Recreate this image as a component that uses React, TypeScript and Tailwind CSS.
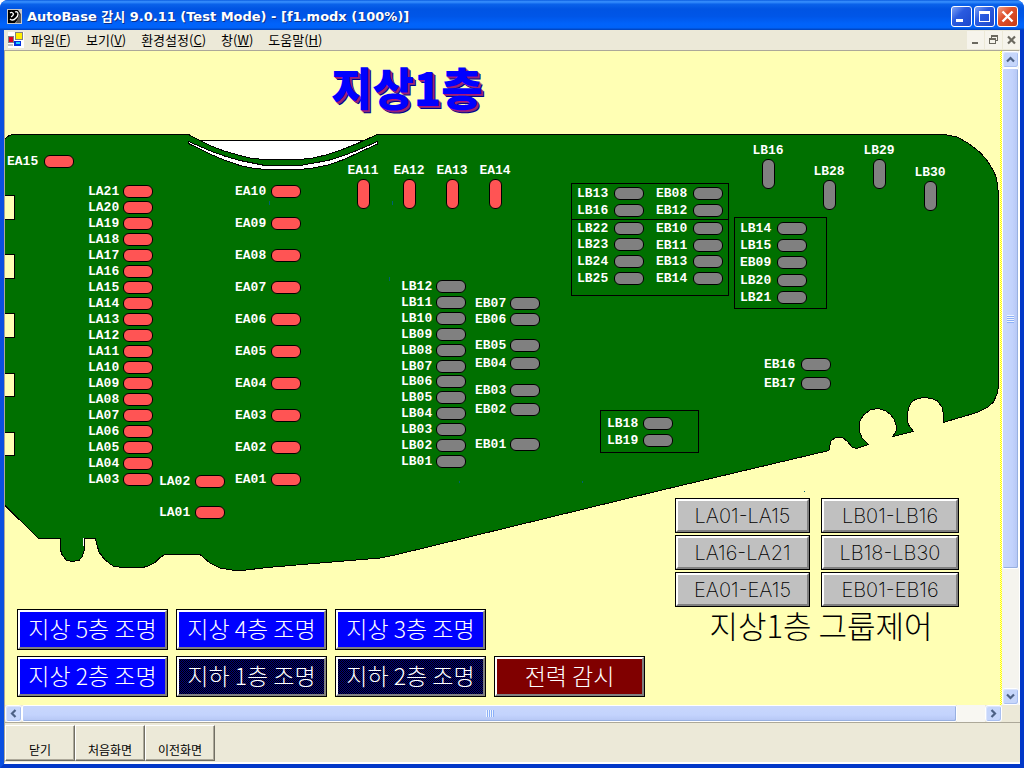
import React from "react";

type Column = { x: number; width: number; on?: boolean; items: [string, number][] };

/* Horizontal fixtures: label on the left, lamp on the right edge of the column. */
const columns: Column[] = [
  { x: 2, width: 67, on: true, items: [["EA15", 104]] },
  {
    x: 83, width: 65, on: true,
    items: [
      ["LA21", 134], ["LA20", 150], ["LA19", 166], ["LA18", 182], ["LA17", 198], ["LA16", 214], ["LA15", 230],
      ["LA14", 246], ["LA13", 262], ["LA12", 278], ["LA11", 294], ["LA10", 310], ["LA09", 326], ["LA08", 342],
      ["LA07", 358], ["LA06", 374], ["LA05", 390], ["LA04", 406], ["LA03", 422],
    ],
  },
  { x: 154, width: 66, on: true, items: [["LA02", 424], ["LA01", 455]] },
  {
    x: 230, width: 66, on: true,
    items: [
      ["EA10", 134], ["EA09", 166], ["EA08", 198], ["EA07", 230], ["EA06", 262],
      ["EA05", 294], ["EA04", 326], ["EA03", 358], ["EA02", 390], ["EA01", 422],
    ],
  },
  {
    x: 396, width: 65,
    items: [
      ["LB12", 229], ["LB11", 245], ["LB10", 261], ["LB09", 277], ["LB08", 293], ["LB07", 309],
      ["LB06", 324], ["LB05", 340], ["LB04", 356], ["LB03", 372], ["LB02", 388], ["LB01", 404],
    ],
  },
  {
    x: 470, width: 65,
    items: [["EB07", 246], ["EB06", 262], ["EB05", 288], ["EB04", 306], ["EB03", 333], ["EB02", 352], ["EB01", 387]],
  },
  {
    x: 572, width: 67,
    items: [["LB13", 136], ["LB16", 153], ["LB22", 171], ["LB23", 187], ["LB24", 204], ["LB25", 221]],
  },
  {
    x: 651, width: 67,
    items: [["EB08", 136], ["EB12", 153], ["EB10", 171], ["EB11", 188], ["EB13", 204], ["EB14", 221]],
  },
  { x: 735, width: 67, items: [["LB14", 171], ["LB15", 188], ["EB09", 205], ["LB20", 223], ["LB21", 240]] },
  { x: 602, width: 66, items: [["LB18", 366], ["LB19", 383]] },
  { x: 759, width: 67, items: [["EB16", 307], ["EB17", 326]] },
];

/* Upright fixtures: label centred above the lamp. */
const uprights: { code: string; x: number; y: number; on?: boolean }[] = [
  { code: "EA11", x: 342, y: 113, on: true },
  { code: "EA12", x: 388, y: 113, on: true },
  { code: "EA13", x: 431, y: 113, on: true },
  { code: "EA14", x: 474, y: 113, on: true },
  { code: "LB16", x: 747, y: 93 },
  { code: "LB28", x: 808, y: 114 },
  { code: "LB29", x: 858, y: 93 },
  { code: "LB30", x: 909, y: 115 },
];

const groups = ["LA01-LA15", "LB01-LB16", "LA16-LA21", "LB18-LB30", "EA01-EA15", "EB01-EB16"];

const menus: [string, string][] = [["파일", "F"], ["보기", "V"], ["환경설정", "C"], ["창", "W"], ["도움말", "H"]];

const labelFont = "font-['Liberation_Mono',monospace] text-[13px] leading-[13px] font-bold text-white";

function Lamp({ on, upright }: { on?: boolean; upright?: boolean }) {
  return (
    <span
      className={`block shrink-0 rounded-md border border-black ${upright ? "h-[30px] w-[13px]" : "h-[13px] w-[30px]"} ${on ? "bg-[#ff5454]" : "bg-[#808080]"}`}
    />
  );
}

function FloorPlan() {
  return (
    <svg className="absolute top-0 left-0" width="996" height="654" viewBox="5 51 996 654" shapeRendering="crispEdges" aria-hidden="true">
      <path
        fill="#007000"
        stroke="#000"
        d="M4.5 140 Q8 134.5 14 134.5 H188.5 L199 140 L210 145.500 L224 151 L240 155.500 L252 158.500 L265 159.500 H300 L313 158 L328 154.500 L345 148.500 L360 142.500 L377 134.500 H944 L950 135.500 L957 137 L968 143 L974 147.500 L980 152.500 L986 159 L990 165 L994 172 L996.500 178 L998 190 L998.500 200 V387 L997 394 L993.500 402 L988 407 L977 412.500 L943 422.500 V412 L942 407 L937.500 401 L932 398.500 L923 397.500 L915 399.500 L911 403 L908.500 408 L907 418 L908.500 425 L913.500 431.500 L893 436.500 L896.500 430 L896 425 L894 419 L890 414 L885 410.500 L878 408.500 L870 410 L863.500 415 L860 421 L859 430 L862 438 L868.500 444.500 L857 448.500 L852 447 L847 441 L843 438 L839 437.500 L835 438 L831 441 L829.500 447 L829 450.500 L660 490.500 L395 555 L380 558 L350 560.500 L267 567.500 L238 571 L220 568 L210 563 L200 554.500 H165 L160 557.500 L155 562.500 L147 566.500 L142 567.500 H122 L113 566 L105 560 L99 552 L96.500 543 L95.500 538.500 H84.500 V550 L82 557 L79 560.500 L72 561.500 L66 560 L62 554.500 L60.500 550 V538.500 H38.500 L4.500 505 Z"
      />
      <path fill="#fff" stroke="#000" d="M200 140.500 H364 L345 148.500 L328 154.500 L313 158 L300 159.500 H265 L252 158.500 L240 155.500 L224 151 L210 145.500 Z" />
      <path
        fill="#fff"
        stroke="#000"
        d="M188.500 141.500 L213 152 L226 156.500 L240 160.500 L265 165.500 H300 L328 160.500 L344 155.500 L358 150 L377.500 141.500 V144 L360 152 L344 159.500 L328 165 L313 168 L300 169.500 H265 L252 168 L240 165.500 L224 160 L210 154 L188.500 143.500 Z"
      />
      <g fill="#ffffb4" stroke="#000">
        <path d="M4.500 195.500 H14.500 V219.500 H4.500 Z M4.500 254.500 H14.500 V278.500 H4.500 Z M4.500 313.500 H14.500 V337.500 H4.500 Z M4.500 373.500 H14.500 V396.500 H4.500 Z M4.500 432.500 H14.500 V455.500 H4.500 Z" />
      </g>
      <path fill="none" stroke="#000" d="M571.500 183.500 H728.500 V295.500 H571.500 Z M571.500 219.500 H728.500 M734.500 217.500 H826.500 V308.500 H734.500 Z M600.500 410.500 H698.500 V452.500 H600.500 Z" />
      <path stroke="#006070" d="M269.500 201 V205 M392.500 201 V205 M389.500 277 V281 M459.500 481 V483 M582.500 481 V483 M804.500 491 V492" />
      <path stroke="#fff" d="M83.500 538 V546" />
    </svg>
  );
}

function PanelButton({ tone, children }: { tone: "blue" | "dark" | "red"; children: React.ReactNode }) {
  const fill = {
    blue: "bg-[#0000ff]",
    dark: "bg-[repeating-conic-gradient(#000080_0_25%,#000000_0_50%)] bg-[length:2px_2px] bg-fixed",
    red: "bg-[#800000]",
  }[tone];
  return (
    <button type="button" className="h-[41px] w-[151px] border border-black">
      <span
        className={`flex h-full items-center justify-center border-2 border-t-white border-r-[#808080] border-b-[#808080] border-l-white pb-1 font-['Noto_Sans_CJK_KR',sans-serif] text-[23px] leading-6 font-light whitespace-pre text-white ${fill}`}
      >
        {children}
      </span>
    </button>
  );
}

function Arrow({ d }: { d: string }) {
  return (
    <svg width="9" height="9" viewBox="0 0 9 9" aria-hidden="true">
      <path d={d} fill="none" stroke="#4d6185" strokeWidth="2.200" />
    </svg>
  );
}

const scrollBtn =
  "flex size-[17px] shrink-0 items-center justify-center rounded-[3px] border border-white bg-[#c6d6fb] shadow-[inset_-1px_-1px_0_#a9bff0,inset_1px_1px_0_#dbe5fd]";

const captionBtn = "flex size-[21px] items-center justify-center rounded-[3px] border border-white";

export default function App() {
  return (
    <div className="flex min-h-screen w-full flex-col overflow-hidden rounded-t-lg bg-[#0a4fe0] font-['Noto_Sans_CJK_KR',sans-serif] text-xs text-black">
      <header className="flex h-[30px] shrink-0 items-center gap-[5px] bg-[linear-gradient(180deg,#0a5ce0_0%,#3a92ff_6%,#0a62ea_14%,#0054e3_30%,#0056e8_55%,#0063fb_80%,#0062f8_92%,#0040b8_100%)] pt-[3px] pr-[6px] pl-[7px]">
        <svg width="15" height="15" viewBox="0 0 15 15" aria-hidden="true">
          <path fill="#c8c8c8" d="M0 0 H15 V15 H0 Z" />
          <path fill="#000" d="M1 1 H11 L13 4 L12 9 L8 14 H1 Z" />
          <path fill="none" stroke="#fff" strokeWidth="1.300" d="M3 4 Q5 2.500 6.500 5 Q6 7 4 8 M8 3 Q11 2 11 5 Q11 8 8 10 M3 10 Q6 12.500 9 9" />
          <path fill="#555" d="M12 6 L14 4 V14 H9 Z" />
        </svg>
        <h1 className="font-['DejaVu_Sans','Noto_Sans_CJK_KR',sans-serif] text-[13px] leading-4 font-bold whitespace-nowrap text-white [text-shadow:1px_1px_0_#0a2f8a]">
          AutoBase 감시 9.0.11 (Test Mode) - [f1.modx (100%)]
        </h1>
        <div className="ml-auto flex gap-[2px]">
          <button type="button" aria-label="최소화" className={`${captionBtn} bg-[linear-gradient(135deg,#7fa2f5,#2a5be0_40%,#1c48cc)]`}>
            <svg width="19" height="19" viewBox="0 0 19 19" aria-hidden="true"><path fill="#fff" d="M4 12 H11 V15 H4 Z" /></svg>
          </button>
          <button type="button" aria-label="최대화" className={`${captionBtn} bg-[linear-gradient(135deg,#7fa2f5,#2a5be0_40%,#1c48cc)]`}>
            <svg width="19" height="19" viewBox="0 0 19 19" shapeRendering="crispEdges" aria-hidden="true"><path fill="#fff" fillRule="evenodd" d="M4 4 H15 V15 H4 Z M5 7 V14 H14 V7 Z" /></svg>
          </button>
          <button type="button" aria-label="닫기" className={`${captionBtn} bg-[linear-gradient(135deg,#f0a088,#e0512c_40%,#c63a14)]`}>
            <svg width="19" height="19" viewBox="0 0 19 19" aria-hidden="true"><path stroke="#fff" strokeWidth="2.400" d="M4.500 4.500 L14.500 14.500 M14.500 4.500 L4.500 14.500" /></svg>
          </button>
        </div>
      </header>

      <div className="flex grow flex-col border-x-4 border-b-4 border-r-[#0238c8] border-b-[#0238c8] border-l-[#0a4fe0]">
        <nav className="flex h-[20px] shrink-0 items-center bg-[#ece9d8] pl-1">
          <svg width="16" height="16" viewBox="0 0 16 16" shapeRendering="crispEdges" aria-hidden="true">
            <path fill="#fff" d="M0 0 H16 V16 H0 Z" />
            <path fill="#808080" d="M0 4 H6 V11 H0 Z M7 0 H15 V8 H7 Z" />
            <path fill="#e00020" d="M1 5 H5 V10 H1 Z" />
            <path fill="#ffee00" d="M8 1 H14 V7 H8 Z" />
            <path fill="#0030e0" d="M6 9 H13 V14 H6 Z" />
            <path fill="#20d0ff" d="M8 10 H12 V12 H8 Z" />
            <path fill="#c0c0c0" d="M0 12 H5 V14 H0 Z" />
          </svg>
          <ul className="ml-[7px] flex gap-[15px] text-[13px] leading-4 whitespace-nowrap">
            {menus.map(([name, key]) => (
              <li key={key}>
                <button type="button">
                  {name}(<u>{key}</u>)
                </button>
              </li>
            ))}
          </ul>
          <div className="ml-auto flex gap-px">
            <button type="button" aria-label="문서 최소화" className="h-[18px] w-[17px] bg-[#f6f4ec]">
              <svg width="17" height="18" viewBox="0 0 17 18" aria-hidden="true"><path fill="#6b6960" d="M5 11 H11 V13 H5 Z" /></svg>
            </button>
            <button type="button" aria-label="문서 복원" className="h-[18px] w-[17px] bg-[#f6f4ec]">
              <svg width="17" height="18" viewBox="0 0 17 18" shapeRendering="crispEdges" aria-hidden="true">
                <path fill="#6b6960" d="M6 4 H13 V10 H11 V9 H12 V6 H7 V7 H6 Z" />
                <path fill="#6b6960" fillRule="evenodd" d="M4 7 H11 V13 H4 Z M5 9 V12 H10 V9 Z" />
              </svg>
            </button>
            <button type="button" aria-label="문서 닫기" className="h-[18px] w-[17px] bg-[#f6f4ec]">
              <svg width="17" height="18" viewBox="0 0 17 18" aria-hidden="true"><path stroke="#6b6960" strokeWidth="2.200" d="M5 5.500 L12 12.500 M12 5.500 L5 12.500" /></svg>
            </button>
          </div>
        </nav>

        <div className="flex grow border-t border-r border-l border-t-[#aca899] border-r-white border-l-[#aca899]">
          <main className="relative grow overflow-hidden bg-[#ffffb4]">
            <FloorPlan />
            {columns.map((col) =>
              col.items.map(([code, y]) => (
                <div
                  key={`${col.x}-${code}`}
                  className={`absolute flex items-center justify-between ${labelFont}`}
                  style={{ left: col.x, top: y, width: col.width }}
                >
                  {code}
                  <Lamp on={col.on} />
                </div>
              )),
            )}
            {uprights.map((f) => (
              <div key={f.code} className={`absolute flex w-8 flex-col items-center gap-[2px] ${labelFont}`} style={{ left: f.x, top: f.y }}>
                {f.code}
                <Lamp on={f.on} upright />
              </div>
            ))}
            <div className="relative flex h-full min-h-[654px] flex-col justify-between">
              <h2 className="ml-[326px] pt-[10px] text-[45px] leading-[52px] font-black text-[#0000ff] [text-shadow:1px_1px_0_#b0107c,2px_2px_0_#803070,3px_3px_0_#000090]">
                지상1층
              </h2>
              <div className="flex items-end justify-between pr-[41px] pb-2 pl-3">
                <div className="grid grid-cols-[repeat(4,max-content)] gap-x-2 gap-y-[6px]">
                  <PanelButton tone="blue">지상 5층 조명</PanelButton>
                  <PanelButton tone="blue">지상 4층 조명</PanelButton>
                  <PanelButton tone="blue">지상 3층 조명</PanelButton>
                  <span />
                  <PanelButton tone="blue">지상 2층 조명</PanelButton>
                  <PanelButton tone="dark">지하 1층 조명</PanelButton>
                  <PanelButton tone="dark">지하 2층 조명</PanelButton>
                  <PanelButton tone="red">전력 감시</PanelButton>
                </div>
                <div className="flex flex-col items-center pb-[50px]">
                  <div className="grid grid-cols-[135px_138px] gap-x-[11px] gap-y-[2px]">
                    {groups.map((g) => (
                      <button key={g} type="button" className="h-[35px] border border-black">
                        <span className="flex h-full items-center justify-center border-2 border-t-white border-r-[#808080] border-b-[#808080] border-l-white bg-[#c0c0c0] font-['Inter',sans-serif] text-xl leading-6 font-extralight">
                          {g}
                        </span>
                      </button>
                    ))}
                  </div>
                  <h3 className="pb-1 pl-2 text-[31px] leading-9 font-light">지상1층 그룹제어</h3>
                </div>
              </div>
            </div>
          </main>
          <div className="w-[2px] shrink-0 bg-[repeating-conic-gradient(#ffff00_0_25%,#ffffb4_0_50%)] bg-[length:2px_2px]" />
          <div className="flex w-[17px] shrink-0 flex-col bg-[#f5f4ee]">
            <button type="button" aria-label="위로" className={scrollBtn}><Arrow d="M1 6.500 L4.500 3 L8 6.500" /></button>
            <div className="flex flex-[500] items-center justify-center rounded-[2px] border border-white bg-[linear-gradient(90deg,#c9d7fc,#c3d3fd_60%,#b5c6f4)] shadow-[inset_-1px_-1px_0_#98b0e0]">
              <span className="h-2 w-[7px] bg-[repeating-linear-gradient(180deg,#eef4fe_0_1px,#8cb0f8_1px_2px)]" />
            </div>
            <div className="flex-[119]" />
            <button type="button" aria-label="아래로" className={scrollBtn}><Arrow d="M1 2.500 L4.500 6 L8 2.500" /></button>
          </div>
        </div>

        <div className="flex h-[17px] shrink-0 border-l border-[#aca899] bg-[#ece9d8] pr-[18px]">
          <button type="button" aria-label="왼쪽으로" className={scrollBtn}><Arrow d="M6.500 1 L3 4.500 L6.500 8" /></button>
          <div className="flex flex-[934] items-center justify-center rounded-[2px] border border-white bg-[linear-gradient(180deg,#c9d7fc,#c3d3fd_60%,#b5c6f4)] shadow-[inset_-1px_-1px_0_#98b0e0]">
            <span className="h-[7px] w-2 bg-[repeating-linear-gradient(90deg,#eef4fe_0_1px,#8cb0f8_1px_2px)]" />
          </div>
          <div className="flex-[28] bg-[#f8f7f2]" />
          <button type="button" aria-label="오른쪽으로" className={scrollBtn}><Arrow d="M2.500 1 L6 4.500 L2.500 8" /></button>
        </div>

        <footer className="flex h-[42px] shrink-0 border-t border-b-2 border-l border-t-[#aca899] border-b-white border-l-[#aca899] bg-[#ece9d8] pt-[2px] pb-px">
          {["닫기", "처음화면", "이전화면"].map((t) => (
            <button
              key={t}
              type="button"
              className="flex h-[36px] w-[70px] items-end justify-center border border-t-white border-r-[#716f64] border-b-[#716f64] border-l-white pb-[2px] leading-4 shadow-[inset_-1px_-1px_0_#aca899]"
            >
              {t}
            </button>
          ))}
        </footer>
      </div>
    </div>
  );
}
